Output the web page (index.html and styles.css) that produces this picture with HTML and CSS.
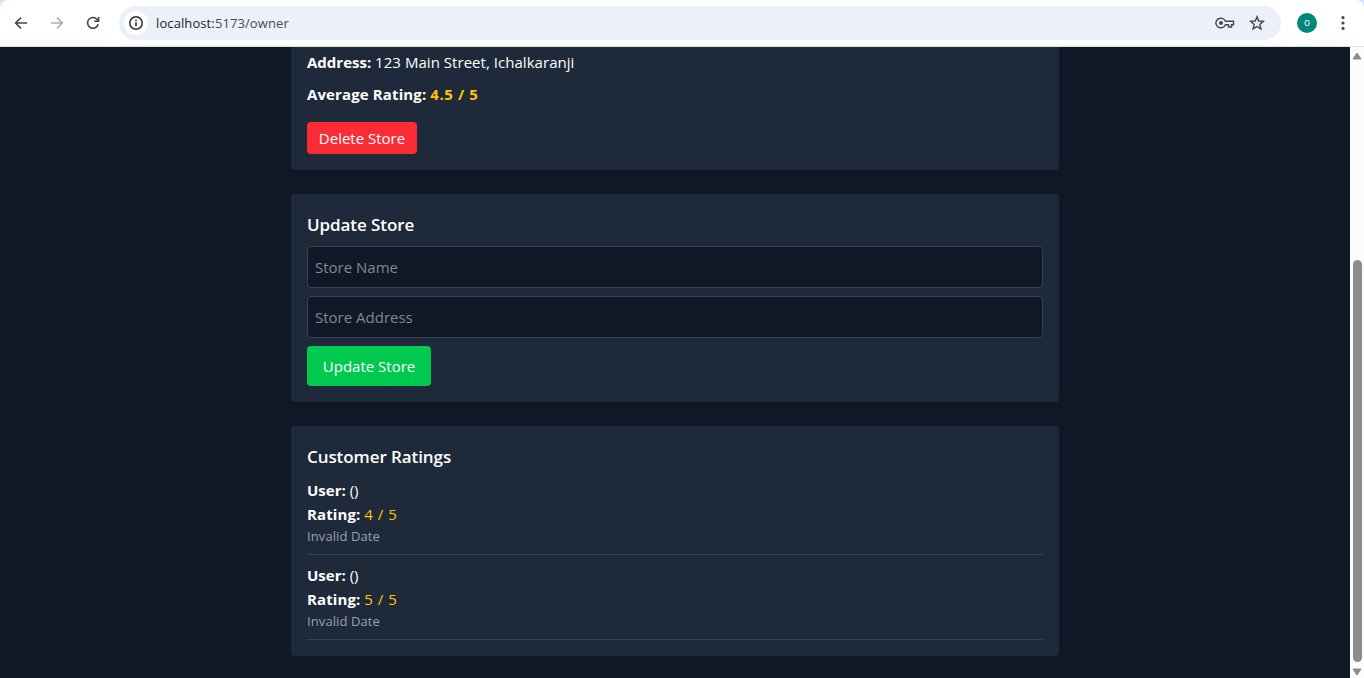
FILE: index.html
```html
<!DOCTYPE html>
<html lang="en">
<head>
<meta charset="utf-8">
<title>Store Owner</title>
<link rel="stylesheet" href="styles.css">
</head>
<body>
<div class="browser">
  <header class="toolbar">
    <nav class="nav">
      <svg class="icon" viewBox="0 0 16 16"><path d="M14 8H2.8M8 2.6 2.6 8 8 13.4"/></svg>
      <svg class="icon icon-muted" viewBox="0 0 16 16"><path d="M2 8h11.2M8 2.6 13.4 8 8 13.4"/></svg>
      <svg class="icon" viewBox="0 0 16 16"><path d="M13.2 9.2A5.4 5.4 0 1 1 12 4.3L13.6 6M13.6 2v4.3H9.3"/></svg>
    </nav>
    <div class="omnibox">
      <span class="site-info"><svg class="icon" viewBox="0 0 16 16"><circle cx="8" cy="8" r="6.2"/><path d="M8 7.2v4M8 4.6v1.6"/></svg></span>
      <span class="url"><span class="host">localhost:</span>5173/owner</span>
      <svg class="key" viewBox="0 0 20 14"><path d="M10.500 5.2A5 4.800 0 1 0 10.500 8.8H13.500V11H16.500V8.8H18.500V5.2Z"/><circle class="dot" cx="6" cy="7" r="2"/></svg>
      <svg class="icon star" viewBox="0 0 16 16"><path d="M8 1.8 9.7 6l4.6.4-3.5 3 1.1 4.5L8 11.5l-3.9 2.4 1.1-4.5-3.5-3L6.300 6Z"/></svg>
    </div>
    <span class="avatar">o</span>
    <svg class="menu" viewBox="0 0 4 16"><circle cx="2" cy="2.600" r="1.600"/><circle cx="2" cy="8" r="1.600"/><circle cx="2" cy="13.400" r="1.600"/></svg>
  </header>
  <div class="viewport">
    <main class="page">
      <section class="card store">
        <p><b>Address:</b> <span class="address">123 Main Street, Ichalkaranji</span></p>
        <p><b class="average-label">Average Rating:</b> <b class="gold average">4.5 / 5</b></p>
        <button class="btn btn-delete">Delete Store</button>
      </section>
      <section class="card">
        <h2>Update Store</h2>
        <input class="field" placeholder="Store Name">
        <input class="field" placeholder="Store Address">
        <button class="btn btn-update">Update Store</button>
      </section>
      <section class="card ratings">
        <h2>Customer Ratings</h2>
        <article class="rating">
          <p><b>User:</b> ()</p>
          <p><b class="rating-label">Rating:</b> <span class="gold score">4 / 5</span></p>
          <p class="date">Invalid Date</p>
        </article>
        <article class="rating">
          <p><b>User:</b> ()</p>
          <p><b class="rating-label">Rating:</b> <span class="gold score">5 / 5</span></p>
          <p class="date">Invalid Date</p>
        </article>
      </section>
    </main>
    <div class="scrollbar">
      <svg class="arrow" viewBox="0 0 10 8"><path d="M5 1 9 7H1Z"/></svg>
      <div class="thumb"></div>
      <svg class="arrow" viewBox="0 0 10 8"><path d="M1 1H9L5 7Z"/></svg>
    </div>
  </div>
</div>
</body>
</html>
```
FILE: styles.css
```css
* { box-sizing: border-box; }
body, h2, p { margin: 0; }
body {
  height: 678px;
  overflow: hidden;
  background: #d3e3fd;
  color: #fff;
  font: 15px/24px "Open Sans", "Noto Sans", sans-serif;
}
.browser { display: flex; flex-direction: column; height: 678px; }
.toolbar {
  display: flex;
  align-items: center;
  height: 47px;
  padding: 0 19px 1px 13px;
  background: #fff;
  border-bottom: 1px solid #dde1e6;
  border-radius: 8px 8px 0 0;
}
.icon { display: block; width: 16px; height: 16px; fill: none; stroke: #474747; stroke-width: 1.6; }
.icon-muted { stroke: #aeaeae; }
.nav { display: flex; gap: 20px; width: 106px; }
.omnibox {
  display: flex;
  align-items: center;
  width: 1162px;
  height: 34px;
  padding: 0 16px 0 5px;
  border-radius: 17px;
  background: #ecf0fa;
}
.site-info { display: grid; place-items: center; width: 24px; height: 24px; border-radius: 50%; background: #fff; }
.site-info .icon { stroke: #333; stroke-width: 1.5; }
.url { flex: 1; margin-left: 8px; color: #4b4d50; font-size: 13px; letter-spacing: 0.1px; }
.host { color: #1f1f1f; }
.key { width: 20px; height: 14px; margin-right: 14px; fill: none; stroke: #474747; stroke-width: 1.4; }
.key .dot { fill: #474747; stroke: none; }
.star { stroke-width: 1.4; }
.avatar {
  width: 20px;
  height: 20px;
  margin-left: 16px;
  border-radius: 50%;
  background: #00897b;
  font-size: 10px;
  line-height: 19px;
  text-align: center;
}
.menu { width: 4px; height: 16px; margin-left: 24px; fill: #474747; }
.viewport { display: flex; flex: 1; min-height: 0; background: #101828; }
.page { display: flex; flex-direction: column; gap: 24px; width: 768px; margin: 0 auto; }
.card { padding: 16px; border-radius: 4px; background: #1e2939; }
.store { height: 123px; padding-top: 3px; border-radius: 0 0 4px 4px; }
.store p { margin-bottom: 8px; }
.address { letter-spacing: 0.04px; }
.average-label { letter-spacing: 0.12px; }
.average { letter-spacing: 0.6px; }
.rating-label { letter-spacing: 0.1px; }
.score { letter-spacing: 0.5px; }
.gold { color: #fdc700; }
.btn {
  display: block;
  padding: 0;
  border: 0;
  border-radius: 4px;
  color: #fff;
  font: inherit;
}
.btn-delete { width: 110px; height: 32px; margin-top: 16px; background: #fb2c36; }
.btn-update { width: 124px; height: 40px; background: #00c950; }
h2 {
  height: 28px;
  margin-bottom: 8px;
  padding-top: 1px;
  font-size: 17px;
  font-weight: 600;
  line-height: 28px;
  letter-spacing: -0.08px;
}
.field {
  display: block;
  width: 100%;
  height: 42px;
  margin-bottom: 8px;
  padding: 0 7px;
  border: 1px solid #364153;
  border-radius: 4px;
  background: #101828;
  color: #fff;
  font: inherit;
}
.field::placeholder { color: #808791; opacity: 1; }
.ratings { height: 230px; }
.rating { height: 77px; margin-bottom: 8px; border-bottom: 1px solid #364153; }
.date { color: #99a1af; font-size: 13px; line-height: 20px; letter-spacing: 0.1px; }
.scrollbar {
  display: flex;
  flex-direction: column;
  align-items: center;
  width: 14px;
  padding-top: 5px;
  background: #fcfcfc;
}
.arrow { width: 10px; height: 8px; fill: #8b8b8b; stroke: #8b8b8b; stroke-linejoin: round; }
.thumb { width: 9px; height: 402px; margin: 200px 0 6px 1px; border-radius: 5px; background: #8b8b8b; }
```
